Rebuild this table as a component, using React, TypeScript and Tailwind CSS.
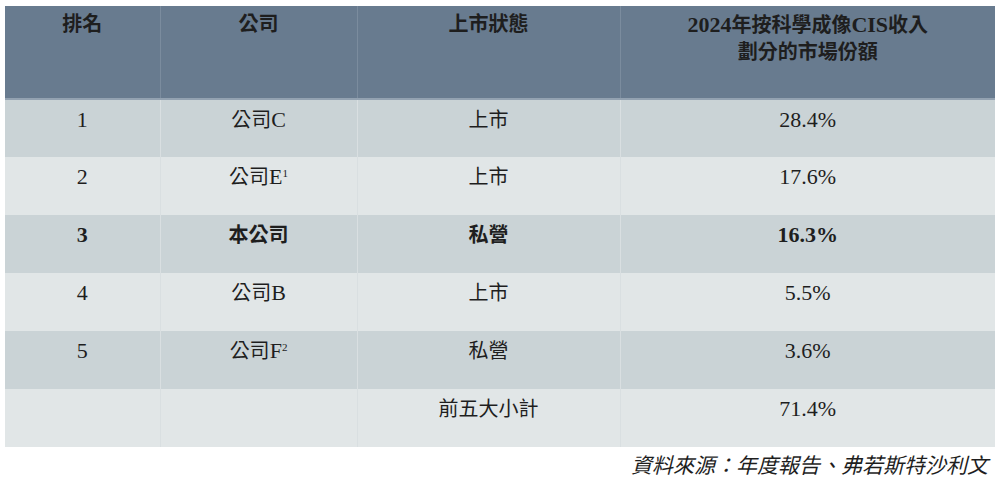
import React from 'react';

type Row = {
  rank: string;
  company: string;
  sup?: string;
  status: string;
  share: string;
  bold?: boolean;
};

const ROWS: Row[] = [
  { rank: '1', company: '公司C', status: '上市', share: '28.4%' },
  { rank: '2', company: '公司E', sup: '1', status: '上市', share: '17.6%' },
  { rank: '3', company: '本公司', status: '私營', share: '16.3%', bold: true },
  { rank: '4', company: '公司B', status: '上市', share: '5.5%' },
  { rank: '5', company: '公司F', sup: '2', status: '私營', share: '3.6%' },
  { rank: '', company: '', status: '前五大小計', share: '71.4%' },
];

const FONT = "font-['Liberation_Serif','Noto_Sans_CJK_TC',serif]";

// latin runs are set a touch larger so they match the wider serif of the source
function Mixed({ text }: { text: string }) {
  const parts = text.match(/[\x00-\x7f]+|[^\x00-\x7f]+/g) ?? [];
  return (
    <>
      {parts.map((p, i) =>
        /^[\x00-\x7f]+$/.test(p) ? (
          <span key={i} className="text-[22px]">{p}</span>
        ) : (
          <span key={i}>{p}</span>
        )
      )}
    </>
  );
}

export default function App() {
  return (
    <div className={`w-[1000px] h-[486px] bg-white pt-[6px] px-[5px] ${FONT}`}>
      <table className="w-[990px] border-collapse table-fixed text-[20px] text-[#1e1e1e]">
        <colgroup>
          <col className="w-[155px]" />
          <col className="w-[197px]" />
          <col className="w-[263px]" />
          <col className="w-[375px]" />
        </colgroup>
        <thead>
          <tr className="h-[93px] bg-[#687b8f] border-b-2 border-[#93a2b1]">
            <th className="align-top pt-[5px] leading-[27px] font-bold border-r border-[#7b8c9e]">排名</th>
            <th className="align-top pt-[5px] leading-[27px] font-bold border-r border-[#7b8c9e]">公司</th>
            <th className="align-top pt-[5px] leading-[27px] font-bold border-r border-[#7b8c9e]">上市狀態</th>
            <th className="align-top pt-[5px] leading-[27px] font-bold">
              <Mixed text="2024年按科學成像CIS收入" />
              <br />
              劃分的市場份額
            </th>
          </tr>
        </thead>
        <tbody>
          {ROWS.map((r, i) => (
            <tr
              key={i}
              className={`h-[58px] ${i % 2 === 0 ? 'bg-[#cad3d6]' : 'bg-[#e1e6e7]'} ${r.bold ? 'font-bold' : ''}`}
            >
              <td className="align-top text-center pt-[6px] leading-[28px] border-r border-[#d9dfe1]">
                <Mixed text={r.rank} />
              </td>
              <td className="align-top text-center pt-[6px] leading-[28px] border-r border-[#d9dfe1]">
                <Mixed text={r.company} />
                {r.sup && <span className="text-[11px] leading-none align-[7px]">{r.sup}</span>}
              </td>
              <td className="align-top text-center pt-[6px] leading-[28px] border-r border-[#d9dfe1]">{r.status}</td>
              <td className="align-top text-center pt-[6px] leading-[28px]">
                <Mixed text={r.share} />
              </td>
            </tr>
          ))}
        </tbody>
      </table>
      <div className="flex justify-end pr-[7px] pt-[4px]">
        <p className="italic text-[21px] leading-[30px] text-[#1e1e1e]">資料來源：年度報告、弗若斯特沙利文</p>
      </div>
    </div>
  );
}
